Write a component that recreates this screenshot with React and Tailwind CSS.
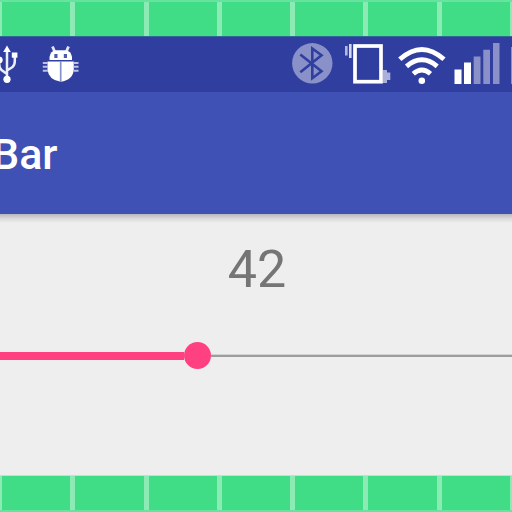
const TILES = [0, 1, 2, 3, 4, 5, 6];

function TileStrip({ className }) {
  return (
    <div className={"flex shrink-0 gap-[5px] overflow-hidden bg-[#8ceab5] pl-[2px] " + className}>
      {TILES.map((t) => (
        <div key={t} className="w-[68.3px] shrink-0 bg-[#40dd86]" />
      ))}
    </div>
  );
}

function StatusIcons() {
  return (
    <svg width="512" height="55" viewBox="0 37 512 55" className="block shrink-0" fill="none">
      {/* USB */}
      <g stroke="#eceef8" strokeWidth="2.5">
        <path d="M7 80V50M7 74L1.500 70Q-0.800 68 -0.800 64V60M7 70.500L12.500 67Q14.800 65 14.800 61V56" />
      </g>
      <g fill="#fff">
        <path d="M7 45.500L10.800 52H3.200Z" />
        <rect x="11.800" y="52.500" width="5.600" height="5.200" />
        <circle cx="-0.500" cy="60" r="3.200" />
        <circle cx="7" cy="79.300" r="3.600" />
      </g>
      {/* Debug bug */}
      <g>
        <path d="M52.500 46.500L55 52.500M68.500 46.500L66 52.500" stroke="#e4e6f4" strokeWidth="2.800" />
        <path d="M49.500 60V57Q50.500 51 55.500 50.300H65.500Q71 51 72 57V60Z" fill="#fff" />
        <rect x="54.300" y="54" width="3.200" height="4" fill="#4f5cae" />
        <rect x="63.800" y="54" width="3.200" height="4" fill="#4f5cae" />
        <path d="M47.500 61.500H73.800V69.500Q73 80 60.700 81.800Q48.500 80 47.500 69.500Z" fill="#fff" />
        <path d="M42.800 63H48M42.800 66.800H48M42.800 70.800H48M78.500 63H73.500M78.500 66.800H73.500M78.500 70.800H73.500" stroke="#bcc1e1" strokeWidth="2" />
        <path d="M60.700 61V82" stroke="#8790c8" strokeWidth="1.700" />
      </g>
      {/* Bluetooth */}
      <circle cx="312.300" cy="63.300" r="20.200" fill="#8991c8" />
      <path d="M300.300 54.500L321.500 71.300L312.300 78.200V48.500L321.500 55.300L300.300 72.200" stroke="#303f9f" strokeWidth="2.600" />
      {/* Vibrate */}
      <rect x="355" y="46" width="26" height="35.700" stroke="#fff" strokeWidth="3.700" />
      <path d="M350.300 44V58" stroke="#d5d8ed" strokeWidth="2.600" />
      <path d="M346.300 46V55.500" stroke="#b3b8dc" strokeWidth="2.600" />
      <path d="M383 70H387V72.500H390.300V80H387V83H383Z" fill="#aab0d9" />
      {/* Wifi */}
      <g stroke="#fff" strokeWidth="4.800">
        <path d="M399.800 59.300Q421.800 39.500 444 59.300" />
        <path d="M406.500 66.300Q421.800 53.300 437.200 66.300" />
        <path d="M413.300 73.800Q421.800 66.200 430.500 73.800" />
      </g>
      <circle cx="421.800" cy="80.800" r="3.300" fill="#fff" />
      {/* Signal */}
      <path d="M454.500 69.500H461.500V84H454.500ZM464 62.500H471V84H464Z" fill="#fff" />
      <path d="M473.700 56.500H480.500V84H473.700ZM483.300 49.700H490V84H483.300ZM493 43H499.500V84H493Z" fill="#8991c8" />
      <path d="M511 47H514V84H511Z" fill="#8991c8" />
    </svg>
  );
}

export default function App() {
  return (
    <div className="flex h-[512px] w-[512px] flex-col overflow-hidden bg-[#eeeeee] font-['Roboto','Liberation_Sans',sans-serif]">
      <div className="h-[2px] shrink-0 bg-[#66e49f]" />
      <TileStrip className="h-[34px]" />
      <div className="h-px shrink-0 bg-[#34679a]" />
      <div className="h-[55px] shrink-0 bg-[#303f9f]">
        <StatusIcons />
      </div>
      <div className="flex h-[122px] shrink-0 items-center bg-[#3f51b5]">
        <h1 className="-ml-[8px] mt-[3px] text-[43px] leading-none font-medium text-white">Bar</h1>
      </div>
      <div className="h-[9px] shrink-0 bg-linear-to-b from-[#b9b9bb] via-[#dadada] to-[#eeeeee]" />
      <div className="flex h-[252px] shrink-0 flex-col">
        <div className="flex h-[119px] shrink-0 justify-center pt-[20px] pl-[2px] text-[52px] leading-[54px] text-[#757575]">
          <span>42</span>
        </div>
        <div className="flex h-[27px] shrink-0 items-center">
          <div className="h-[8px] w-[184px] bg-[#ff4081]" />
          <div className="size-[27px] rounded-full bg-[#ff4081]" />
          <div className="h-[3px] flex-1 border-t border-[#d2d2d2] bg-[#9d9d9d]" />
        </div>
      </div>
      <div className="h-px shrink-0 bg-[#b4e8ca]" />
      <TileStrip className="h-[34px]" />
      <div className="h-[2px] shrink-0 bg-[#66e49f]" />
    </div>
  );
}
